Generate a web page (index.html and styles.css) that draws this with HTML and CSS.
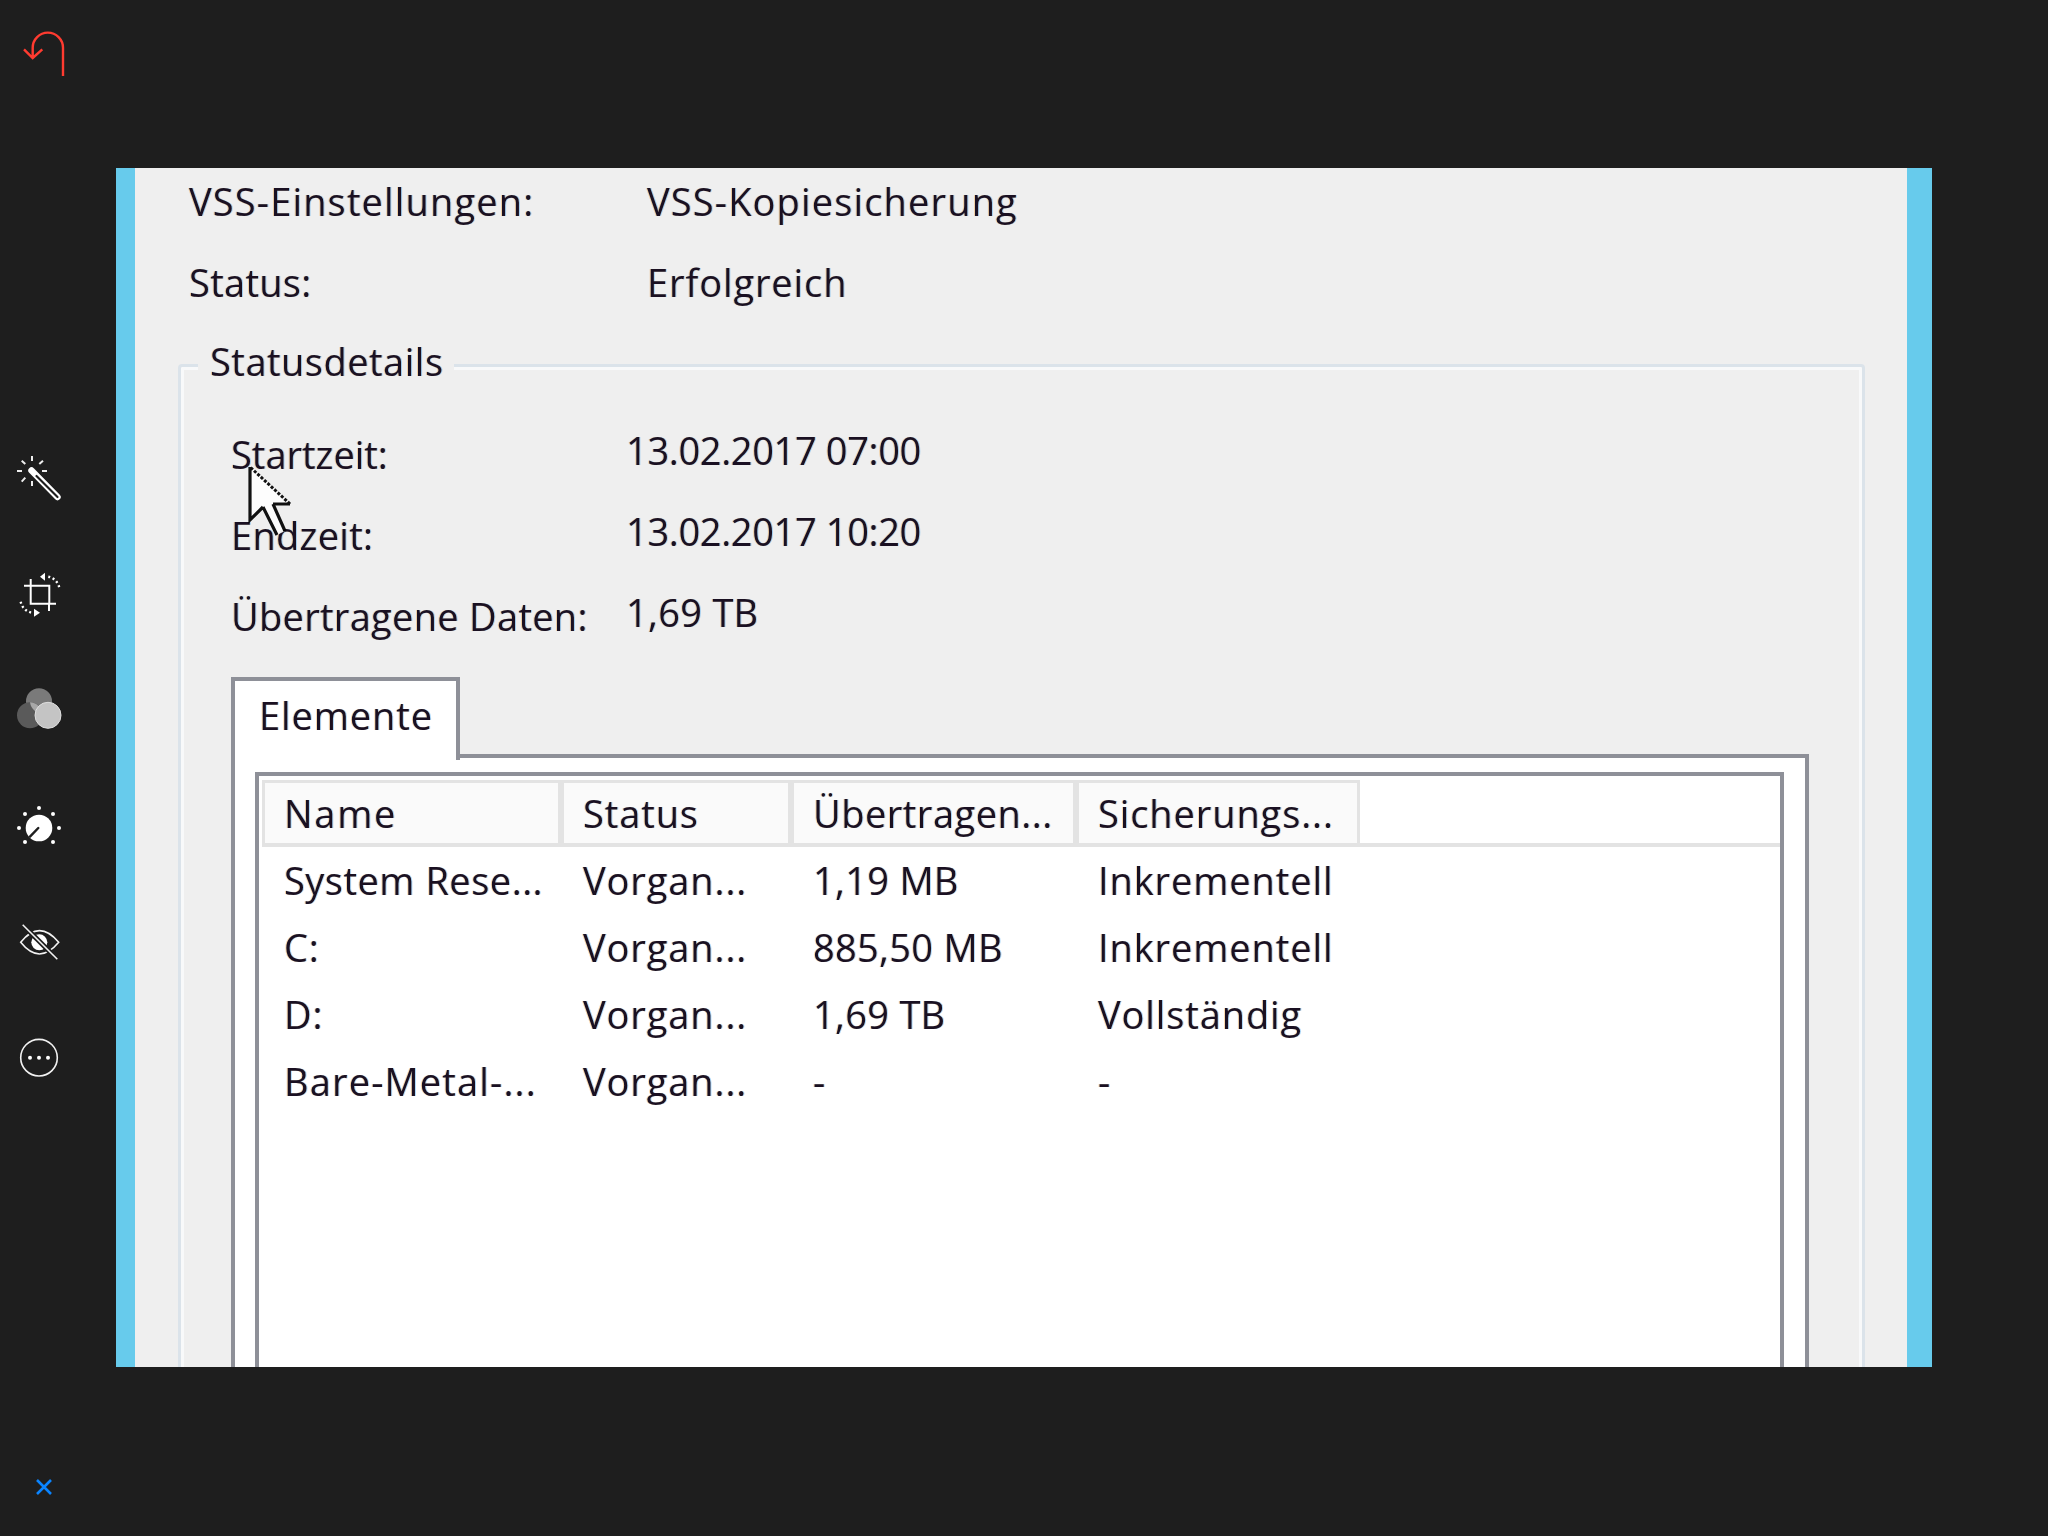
FILE: index.html
```html
<!DOCTYPE html>
<html lang="de">
<head>
<meta charset="utf-8">
<title>VSS-Kopiesicherung</title>
<link rel="stylesheet" href="styles.css">
</head>
<body>
<div class="app">
  <aside class="toolbar">
    <svg class="undo" viewBox="0 0 50 50" width="50" height="50"><path d="M43 46V17.8A15.15 15.15 0 0 0 12.7 17.8V28M4 19.3L12.7 28L22.3 19.3"/></svg>
    <div class="tools">
      <svg class="tool" viewBox="0 0 60 60" width="60" height="60">
        <path class="ray" d="M23 6v5M23 31v5M8 21h5M33 21h5M12.7 10.7l3.6 3.3M34 10.7l-3.7 3.3M12.7 31.7l3.6-4"/>
        <path class="wand-o" d="M22.5 20.5L48.5 47"/>
        <path class="wand-i" d="M27.5 26L48.5 47"/>
      </svg>
      <svg class="tool" viewBox="0 0 60 60" width="60" height="60">
        <path class="crop" d="M15 19.7H40.3V37.7M47 37.7H21.7V19.7M21.7 13V19.7M40 37.7V45"/>
        <path class="dots" d="M39.3 10.7A14 14 0 0 1 50.3 21.7M11.7 35.7A14 14 0 0 0 22.7 46.7"/>
        <path class="fill" d="M31 10.7L36 6.7V14.7ZM31 46.7L25 42.7V50.7Z"/>
      </svg>
      <svg class="tool" viewBox="0 0 60 60" width="60" height="60">
        <circle cx="30" cy="20.3" r="13" fill="#7a7a7a"/>
        <circle cx="21" cy="34.3" r="13" fill="#5a5a5a"/>
        <path d="M21 21.3A13 13 0 0 1 33.5 32.8A13 13 0 0 1 26 30A13 13 0 0 1 21 21.3Z" fill="#a8a8a8"/>
        <circle cx="39" cy="34.3" r="13" fill="#c4c4c4" stroke="#dedede" stroke-width="1"/>
      </svg>
      <svg class="tool" viewBox="0 0 60 60" width="60" height="60">
        <circle class="fill" cx="30" cy="31" r="13.3"/>
        <path class="needle" d="M29.3 31L21 39.7"/>
        <g class="fill"><circle cx="30" cy="11" r="2"/><circle cx="16" cy="17" r="2"/><circle cx="44" cy="17" r="2"/><circle cx="10" cy="31" r="2"/><circle cx="50" cy="31" r="2"/><circle cx="16" cy="45" r="2"/><circle cx="44" cy="45" r="2"/></g>
      </svg>
      <svg class="tool" viewBox="0 0 60 60" width="60" height="60">
        <path class="line" d="M11.7 30.3Q30.3 7 49.7 30.3Q30.3 53.6 11.7 30.3Z"/>
        <circle class="fill" cx="30.3" cy="30.3" r="8"/>
        <path class="slash-b" d="M13.7 12.7L48.3 47.3"/>
        <path class="slash" d="M13.7 12.7L48.3 47.3"/>
      </svg>
      <svg class="tool" viewBox="0 0 60 60" width="60" height="60">
        <circle class="line" cx="30" cy="29.7" r="18.3"/>
        <g class="fill"><circle cx="21" cy="29.7" r="2"/><circle cx="30" cy="29.7" r="2"/><circle cx="39" cy="29.7" r="2"/></g>
      </svg>
    </div>
    <svg class="close" viewBox="0 0 20 20" width="20" height="20"><path d="M3 3L17 17M17 3L3 17"/></svg>
  </aside>

  <main class="screen">
    <div class="window">
      <div class="row"><span class="label-top vss">VSS-Einstellungen:</span><span class="vss">VSS-Kopiesicherung</span></div>
      <div class="row"><span class="label-top num">Status:</span><span>Erfolgreich</span></div>
      <section class="group">
        <div class="legend num-mid">Statusdetails</div>
        <div class="detail"><span class="detail-label num-none">Startzeit:</span><span class="detail-value num-tight">13.02.2017 07:00</span></div>
        <div class="detail"><span class="detail-label num">Endzeit:</span><span class="detail-value num-tight">13.02.2017 10:20</span></div>
        <div class="detail"><span class="detail-label num">Übertragene Daten:</span><span class="detail-value num">1,69 TB</span></div>
        <div class="tabs">
          <div class="tab">Elemente</div>
          <div class="tab-panel">
            <div class="list">
              <div class="list-head">
                <div class="head-cell wide">Name</div>
                <div class="head-cell">Status</div>
                <div class="head-cell num-mid">Übertragen...</div>
                <div class="head-cell">Sicherungs...</div>
              </div>
              <div class="list-row"><span class="num-mid">System Rese...</span><span>Vorgan...</span><span class="num">1,19 MB</span><span>Inkrementell</span></div>
              <div class="list-row"><span>C:</span><span>Vorgan...</span><span class="num">885,50 MB</span><span>Inkrementell</span></div>
              <div class="list-row"><span>D:</span><span>Vorgan...</span><span class="num">1,69 TB</span><span>Vollständig</span></div>
              <div class="list-row"><span class="vss">Bare-Metal-...</span><span>Vorgan...</span><span>-</span><span>-</span></div>
            </div>
          </div>
        </div>
      </section>
    </div>
    <svg class="cursor" viewBox="0 0 46 76" width="46" height="76">
      <path class="cursor-body" d="M3 2V55L16 42L30 70L38 66L26 39H43Z"/>
      <path class="cursor-edge" d="M3 2V55L16 42M26 39H43M16 42L30 70M26 39L38 66"/>
      <path class="cursor-dash" d="M43 39L3 2"/>
    </svg>
  </main>
</div>
</body>
</html>
```
FILE: styles.css
```css
* { box-sizing: border-box; }
html, body { margin: 0; height: 100%; }
body { background: #1e1e1e; overflow: hidden; }
.app { display: flex; width: 2048px; height: 1536px; }

.toolbar { width: 116px; flex: none; display: flex; flex-direction: column; align-items: flex-start; }
.undo { margin: 30px 0 0 20px; fill: none; stroke: #ff3b30; stroke-width: 2.4; }
.tools { margin: 370px 0 0 9px; display: flex; flex-direction: column; gap: 55.6px; }
.tool { display: block; }
.close { margin: 389px 0 0 34px; fill: none; stroke: #0a84ff; stroke-width: 2.6; }

.ray { stroke: #eee; stroke-width: 2; fill: none; }
.wand-o { stroke: #fff; stroke-width: 6.4; stroke-linecap: round; fill: none; }
.wand-i { stroke: #1e1e1e; stroke-width: 2.2; stroke-linecap: round; fill: none; }
.crop { stroke: #fff; stroke-width: 2; fill: none; }
.dots { stroke: #fff; stroke-width: 2.4; stroke-dasharray: 2 2.6; fill: none; }
.fill { fill: #fff; }
.needle { stroke: #1e1e1e; stroke-width: 2.4; stroke-linecap: round; fill: none; }
.line { stroke: #f2f2f2; stroke-width: 1.6; fill: none; }
.slash-b { stroke: #1e1e1e; stroke-width: 5; fill: none; }
.slash { stroke: #f2f2f2; stroke-width: 1.6; fill: none; }

.screen { position: relative; width: 1816px; height: 1199px; margin-top: 168px; overflow: hidden; background: #efefef; border-left: 19px solid #67cbec; border-right: 25px solid #67cbec; }
.window {
  height: 100%;
  padding: 0 42px 0 43px;
  font: 38px/66px "Open Sans", "Noto Sans", sans-serif;
  letter-spacing: .9px;
  color: #1a1022;
  text-shadow: -1px 0 rgba(240, 150, 30, .35), 1px 0 rgba(30, 150, 240, .35);
  filter: blur(.6px);
}
.num { letter-spacing: .3px; }
.num-mid { letter-spacing: .5px; }
.num-tight { letter-spacing: -.35px; }
.num-none { letter-spacing: 0; }
.wide { letter-spacing: 1.7px; }
.vss { letter-spacing: 1.15px; }
.row { display: flex; height: 66px; margin-bottom: 15px; padding-left: 11px; }
.label-top { width: 458px; flex: none; }

.group { position: relative; height: 1100px; margin-top: 49px; border: 3px solid #dbe3ea; border-radius: 4px; box-shadow: inset 0 0 0 3px #f8f9fa; padding: 0 53px 0 50px; }
.legend { width: fit-content; height: 66px; margin: -39px 0 27px -33px; padding: 0 10px 0 12px; background: #efefef; }
.detail { display: flex; height: 66px; margin-bottom: 15px; }
.detail-label { width: 395px; flex: none; }
.detail-value { line-height: 58px; }

.tabs { margin-top: 28px; }
.tab { position: relative; z-index: 1; width: 229px; height: 83px; margin-bottom: -6px; border: 4px solid #8e9098; border-bottom: 0; background: #fff; padding: 0 0 0 24px; line-height: 68px; }
.tab-panel { background: #fff; border: 4px solid #8e9098; padding: 14px 21px 0 20px; height: 800px; }
.list { border: 4px solid #8e9098; padding: 4px 0 0 3px; height: 780px; background: #fff; }
.list-head { display: grid; grid-template-columns: 299px 230px 285px 284px; height: 67px; border-bottom: 4px solid #e3e3e3; }
.head-cell { background: #fafafa; border: 3px solid #e3e3e3; border-bottom: 0; padding-left: 19px; line-height: 60px; }
.list-row { display: grid; grid-template-columns: 299px 230px 285px 284px; height: 67px; line-height: 66px; }
.list-row span { padding-left: 22px; }

.cursor { position: absolute; left: 112px; top: 297px; opacity: .92; }
.cursor-body { fill: #fff; }
.cursor-edge { stroke: #000; stroke-width: 3.2; fill: none; }
.cursor-dash { stroke: #000; stroke-width: 3; stroke-dasharray: 3 1.6; fill: none; }
```
